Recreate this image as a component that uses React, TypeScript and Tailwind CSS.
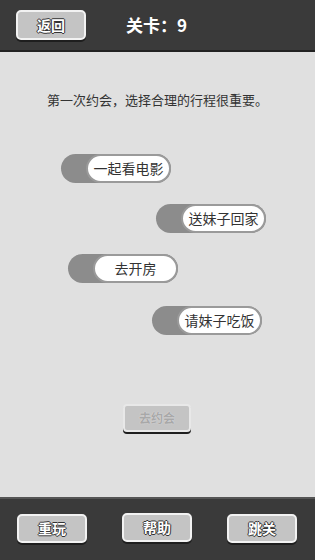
const font = "font-['Noto_Sans_CJK_SC',sans-serif]";

const options = [
  { label: "一起看电影", offset: "ml-[61px]", gap: "mt-0" },
  { label: "送妹子回家", offset: "ml-[156px]", gap: "mt-[21px]" },
  { label: "去开房", offset: "ml-[68px]", gap: "mt-[21px]" },
  { label: "请妹子吃饭", offset: "ml-[152px]", gap: "mt-[23px]" },
];

function GameButton({ label, className = "" }: { label: string; className?: string }) {
  return (
    <button
      className={`h-[29px] w-[70px] rounded-[5px] border-2 border-[#f2f2f2] bg-[#c4c4c4] text-[14px] font-bold text-white shadow-[0_2px_0_#1e1e1e] [text-shadow:_-1px_0_#333,_1px_0_#333,_0_-1px_#333,_0_1px_#333] ${className}`}
    >
      {label}
    </button>
  );
}

function Toggle({ label }: { label: string }) {
  return (
    <div className="flex h-[29px] w-[110px] items-center rounded-full bg-[#8c8c8c]">
      <div className="ml-auto flex h-[29px] w-[85px] items-center justify-center rounded-full border-2 border-[#9a9a9a] bg-white text-[14px] text-[#333]">
        {label}
      </div>
    </div>
  );
}

export default function App() {
  return (
    <div className={`flex h-[560px] w-[315px] flex-col bg-[#e0e0e0] ${font}`}>
      {/* Header */}
      <header className="flex h-[52px] shrink-0 items-center border-b-2 border-[#222] bg-[#3a3a3a]">
        <GameButton label="返回" className="ml-[16px] h-[30px]" />
        <div className="ml-[40px] text-[17px] font-bold text-white">关卡：9</div>
      </header>

      {/* Body */}
      <main className="flex flex-1 flex-col">
        <p className="mt-[38px] text-center text-[13px] text-[#333]">第一次约会，选择合理的行程很重要。</p>

        <div className="mt-[44px] flex flex-col">
          {options.map((o) => (
            <div key={o.label} className={`${o.offset} ${o.gap}`}>
              <Toggle label={o.label} />
            </div>
          ))}
        </div>

        <div className="mt-[69px] flex justify-center">
          <button className="ml-[-1px] h-[28px] w-[68px] rounded-[4px] border-2 border-[#e8e8e8] bg-[#c4c4c4] text-[12px] font-bold text-[#a8a8a8] shadow-[0_2px_0_#1e1e1e] [text-shadow:_0_0_1px_#eee]">
            去约会
          </button>
        </div>
      </main>

      {/* Footer */}
      <footer className="flex h-[63px] shrink-0 items-center justify-between border-t-2 border-[#555] bg-[#3a3a3a] px-[17px] pb-[2px]">
        <GameButton label="重玩" />
        <GameButton label="帮助" className="-mt-[2px]" />
        <GameButton label="跳关" className="mr-[1px]" />
      </footer>
    </div>
  );
}
